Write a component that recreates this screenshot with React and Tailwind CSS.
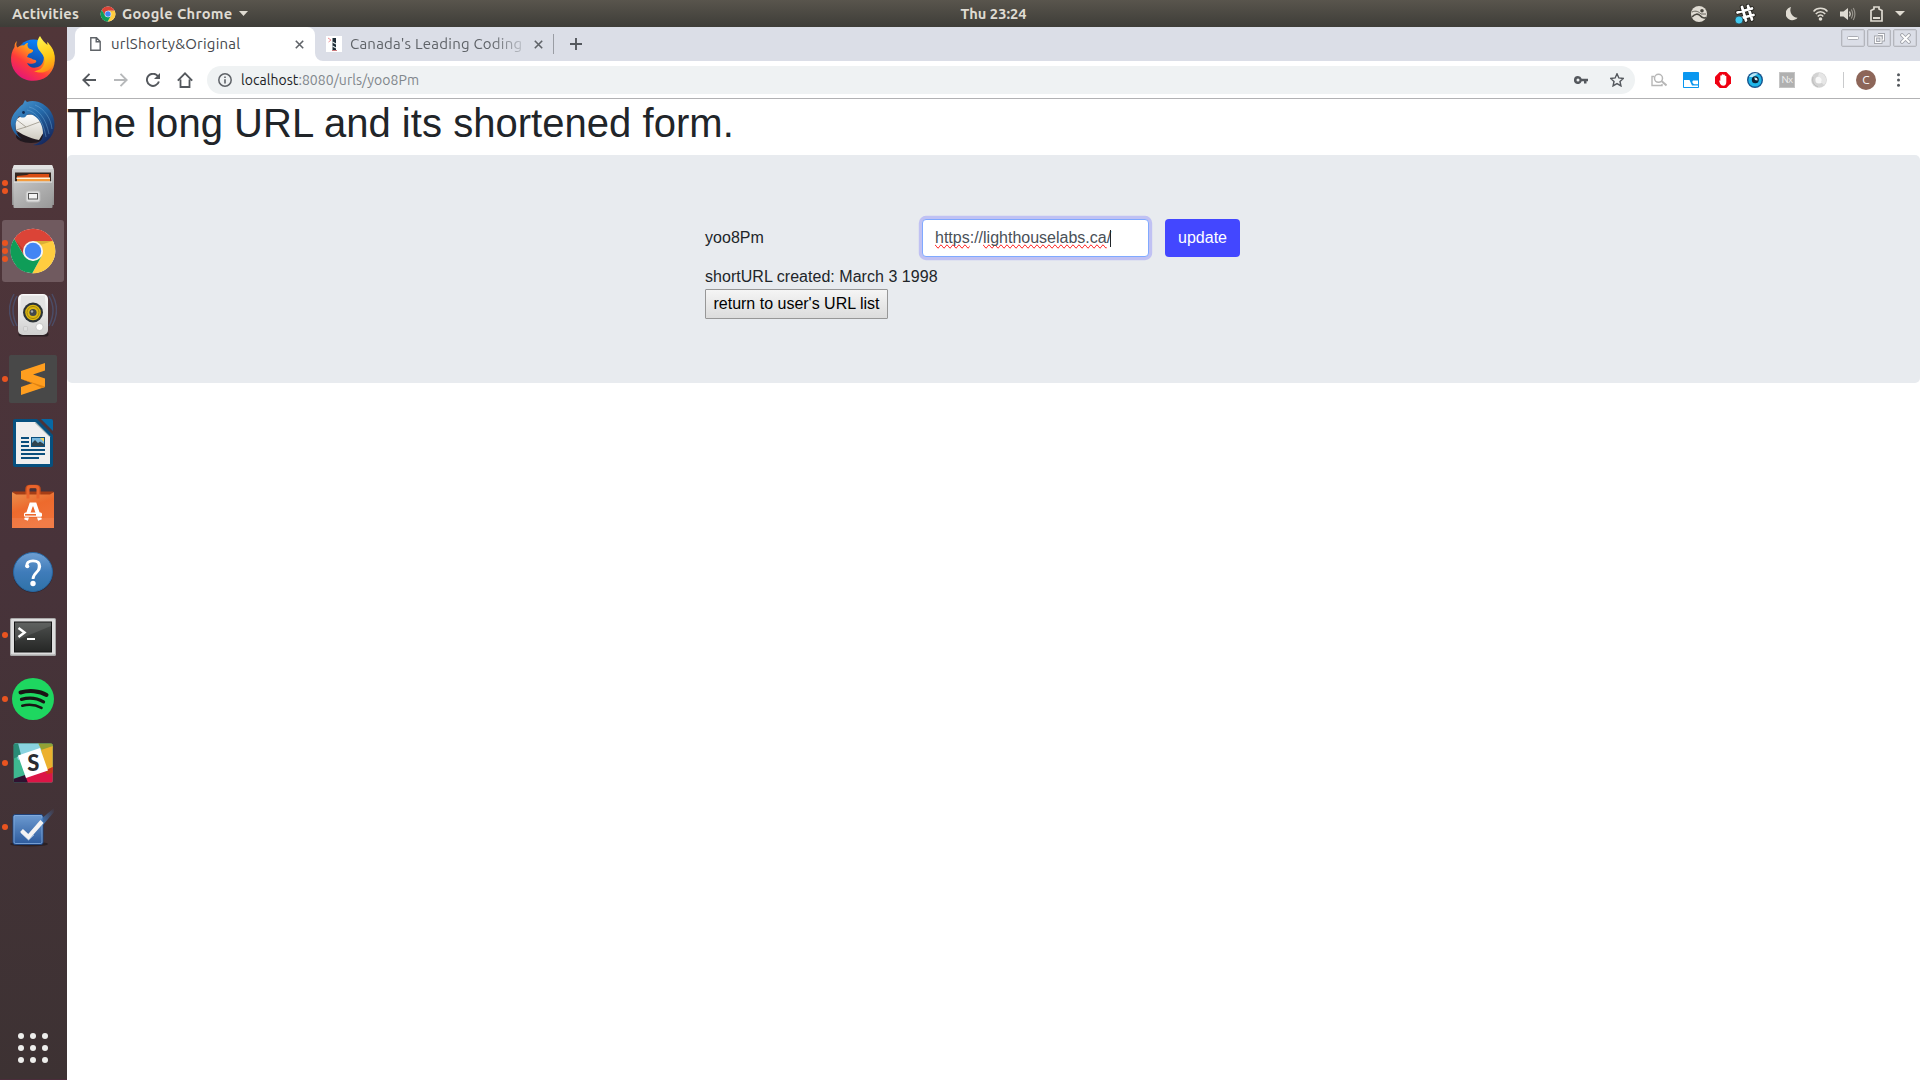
import React from "react";

const ui = "font-['Ubuntu','Noto_Sans',sans-serif]";
const arial = "font-['Liberation_Sans',Arial,sans-serif]";

function ChromeLogo({ className, ring = 10 }) {
  return (
    <svg className={className} viewBox="0 0 48 48">
      <circle cx="24" cy="24" r="22.3" fill="#fff" />
      <path d="M24 14H43.9A22.3 22.3 0 0 0 5.2 12L15.3 29Z" fill="#db4437" />
      <path d="M43.9 14A22.3 22.3 0 0 1 23.3 46.3L32.7 29 24 14Z" fill="#ffcd40" />
      <path d="M5.2 12A22.3 22.3 0 0 0 23.3 46.3L32.7 29 24 34 15.3 29Z" fill="#0f9d58" />
      <path d="M24 14H43.9L28 19ZM15.3 29 5.2 12 16 24Z" fill="#000" opacity=".14" />
      <circle cx="24" cy="24" r={ring} fill="#f5f5f5" />
      <circle cx="24" cy="24" r="8.2" fill="#4285f4" />
    </svg>
  );
}

function Svg({ children }) {
  return (
    <svg className="h-12 w-12" viewBox="0 0 48 48">
      {children}
    </svg>
  );
}

const Firefox = () => (
  <Svg>
    <defs>
      <linearGradient id="ffa" x1="0.8" y1="0" x2="0.15" y2="0.9">
        <stop offset="0" stopColor="#ffde32" />
        <stop offset=".35" stopColor="#ff9a1c" />
        <stop offset=".65" stopColor="#ff3b3b" />
        <stop offset="1" stopColor="#e3157a" />
      </linearGradient>
      <linearGradient id="ffb" x1="0.6" y1="0" x2="0.3" y2="1">
        <stop offset="0" stopColor="#0a84ff" />
        <stop offset="1" stopColor="#15317f" />
      </linearGradient>
      <linearGradient id="ffc" x1="0.4" y1="0" x2="0.6" y2="1">
        <stop offset="0" stopColor="#fff44f" />
        <stop offset=".6" stopColor="#ffc814" />
        <stop offset="1" stopColor="#ff8a16" />
      </linearGradient>
    </defs>
    <circle cx="24.5" cy="22" r="17.5" fill="url(#ffb)" />
    <path d="M8 6C7 9 7 11 8.500 12.500C11 10.500 13 10 15 10.500C16.500 8.500 18 8 19 8C18 10 18.500 12 20 13.500L24 15C24.500 17 22 18 19.500 19L18 22C20 23 22 23 24 24.500C28 25 28 27 26 28C24 29 20 29 18 28C20 33 26 34 31 31C35 28 36 22 33.500 17L43 14C48 24 46 35 38 41.500C29 48 16 47 9 40C1 33 0 20 5.500 12C5.500 9 6 7.500 8 6Z" fill="url(#ffa)" />
    <path d="M31 1C28 5 27 10 30 15C34 20 37 23 35 29C33 34 29 36 25 36C33 40 41 36 44 30C48 21 44 13 40 9C39.500 8 39 7.500 38 7L38.500 10C36 8 33 5 31 1Z" fill="url(#ffc)" />
  </Svg>
);

const Thunderbird = () => (
  <Svg>
    <defs>
      <linearGradient id="tba" x1="0" y1="0" x2="0.7" y2="1">
        <stop offset="0" stopColor="#4f9fd8" />
        <stop offset=".5" stopColor="#2468a8" />
        <stop offset="1" stopColor="#16295f" />
      </linearGradient>
      <linearGradient id="tbb" x1="0" y1="0" x2="0" y2="1">
        <stop offset="0" stopColor="#fff" />
        <stop offset="1" stopColor="#cfcbc0" />
      </linearGradient>
    </defs>
    <ellipse cx="22" cy="37" rx="15" ry="7" fill="#21191f" />
    <path d="M6 21 14 16 31 15 36 31 30 41C20 39 12 35 7 31Z" fill="url(#tbb)" />
    <path d="M8 21 17 28 33 22M7 31 17 28" fill="none" stroke="#989387" strokeWidth=".8" />
    <path d="M7 12C11 7 13 6 14 5L16 1 18 3C27 0 37 5 42 13C48 23 46 35 39 41C34 46 28 47 24 46C31 44 34 40 34 35C34 29 32 23 28 19C24 15 19 14 17 17C16 19 12 19 10 17C6.500 22 5.500 27 7 32C8 35 10 38 13 40C5 36 1 28 2 22C3 17 5 14 7 12Z" fill="url(#tba)" />
    <path d="M20 8C29 10 37 19 40 35M26 6C36 10 42 20 43 30M18 11C27 13 34 21 37 38" stroke="#7db7e2" strokeWidth=".8" fill="none" opacity=".5" />
    <circle cx="14.500" cy="13.500" r="1.400" fill="#122b52" />
  </Svg>
);

const Files = () => (
  <Svg>
    <defs>
      <linearGradient id="fia" x1="0" y1="0" x2="0" y2="1">
        <stop offset="0" stopColor="#d5d5d5" />
        <stop offset="1" stopColor="#8e8e8e" />
      </linearGradient>
      <linearGradient id="fib" x1="0" y1="0" x2="1" y2="1">
        <stop offset="0" stopColor="#c4c4c4" />
        <stop offset="1" stopColor="#989898" />
      </linearGradient>
    </defs>
    <path d="M5 2H43L45 7V42H3V7Z" fill="url(#fia)" />
    <path d="M5 2H43L44.500 6H3.500Z" fill="#e2e2e2" />
    <rect x="6" y="9.500" width="36" height="10" fill="#342620" />
    <path d="M8 13 18 12 20 11H40V19H8Z" fill="#d94d13" />
    <rect x="7.500" y="14.500" width="33.500" height="1.500" fill="#fff3d8" />
    <rect x="8" y="16" width="33" height="3" fill="#f49b3c" />
    <rect x="4.500" y="18.500" width="39" height="26.500" rx="1" fill="url(#fib)" />
    <path d="M5 19H43" stroke="#e9e9e9" />
    <rect x="17" y="28" width="14" height="11" rx="2" fill="#dedede" stroke="#bbb" />
    <rect x="19.500" y="30.500" width="9" height="5.500" fill="#f3f3f3" stroke="#555" strokeWidth="1" />
  </Svg>
);

const Rhythmbox = () => (
  <Svg>
    <defs>
      <linearGradient id="rha" x1="0" y1="0" x2="0" y2="1">
        <stop offset="0" stopColor="#fafafa" />
        <stop offset="1" stopColor="#cfcfcf" />
      </linearGradient>
    </defs>
    <g fill="none" stroke="#4b6b9e" strokeWidth="1.500" opacity=".45">
      <path d="M5 3Q-4 19 5 35M8 5Q0 19 8 35M43 3Q52 19 43 35M40 5Q48 19 40 35" />
    </g>
    <rect x="9.500" y="41" width="30" height="4.500" rx="2" fill="#2b1f23" />
    <rect x="9" y="3" width="30" height="41" rx="5" fill="url(#rha)" />
    <path d="M12 4.500H36L37 27H11Z" fill="#e3e3e3" />
    <circle cx="24" cy="21.500" r="10" fill="#2d3438" />
    <circle cx="24" cy="21.500" r="7.800" fill="#dcb712" />
    <circle cx="24" cy="21.500" r="6" fill="none" stroke="#a58608" />
    <circle cx="24" cy="21.500" r="3.600" fill="#42484c" />
    <circle cx="23" cy="20.500" r="1.200" fill="#a8acae" />
    <circle cx="30.500" cy="36" r="3.600" fill="#fff" stroke="#bbb" strokeWidth=".7" />
    <rect x="14.500" y="35.500" width="4" height="4.500" rx="1" fill="#ddd" stroke="#c2c2c2" strokeWidth=".7" />
  </Svg>
);

const Sublime = () => (
  <Svg>
    <rect width="48" height="48" rx="2" fill="#484848" />
    <path d="M12 16 36 8V15.500L24 19.500 36 23.500V32L12 40V32L23.500 28 12 24Z" fill="#ff9e1f" />
    <path d="M12 24 36 31.500V32L33 33 23 28.300Z" fill="#e28310" />
  </Svg>
);

const Writer = () => (
  <Svg>
    <path d="M6 0H28L44 16V46Q44 48 42 48H6Q4 48 4 46V2Q4 0 6 0Z" fill="#06507f" />
    <path d="M32 0H42Q44 0 44 2V12Z" fill="#0768a3" />
    <path d="M7 3H26.500L41 17.500V45H7Z" fill="#efefef" />
    <path d="M26.500 3 41 17.500H40L26 4Z" fill="#9aa" />
    <g fill="#0b4f7d">
      <rect x="12" y="18" width="8" height="2" />
      <rect x="12" y="22" width="8" height="2" />
      <rect x="12" y="26" width="8" height="2" />
      <rect x="12" y="30" width="24" height="2" />
      <rect x="12" y="34" width="24" height="2" />
      <rect x="12" y="38" width="18" height="2" />
      <rect x="22" y="18" width="14" height="10" />
    </g>
    <rect x="23" y="19" width="12" height="8" fill="#7ab8dd" />
    <path d="M31 19H35V23Z" fill="#f3d35c" />
    <path d="M23 27V24L26 21 29 24 31 22.500 35 25V27Z" fill="#30444f" />
  </Svg>
);

const Software = () => (
  <Svg>
    <defs>
      <linearGradient id="soa" x1="0" y1="0" x2="0.4" y2="1">
        <stop offset="0" stopColor="#e9914e" />
        <stop offset=".5" stopColor="#ed6a2d" />
        <stop offset="1" stopColor="#f07138" />
      </linearGradient>
    </defs>
    <path d="M3.500 8.500H44.500L42 13H6Z" fill="#a63d15" />
    <path d="M18 12V6Q18 3.500 21 3.500H27Q30 3.500 30 6V12" fill="none" stroke="#c04b1b" strokeWidth="3.500" />
    <path d="M3 9 7 11.500H41L45 9V45H3Z" fill="url(#soa)" />
    <path d="M19 15.500V6Q19 3.500 22 3.500H26Q29 3.500 29 6V15.500" fill="none" stroke="#e9642c" strokeWidth="3" />
    <path d="M3 35H45V45H3Z" fill="#fff" opacity=".08" />
    <path d="M17 37 22.200 21.500H25.800L31 37" fill="none" stroke="#fff" strokeWidth="4" />
    <rect x="15" y="29.500" width="18" height="4.500" rx="1.500" fill="#fff" />
    <rect x="16" y="31" width="11" height="1.600" fill="#ed6a2d" />
    <path d="M13 34.200H35" stroke="#ed6a2d" strokeWidth=".8" />
  </Svg>
);

const Help = () => (
  <Svg>
    <defs>
      <linearGradient id="hea" x1="0" y1="0" x2="0" y2="1">
        <stop offset="0" stopColor="#6f9fd2" />
        <stop offset=".5" stopColor="#3f7cba" />
        <stop offset="1" stopColor="#2f72a8" />
      </linearGradient>
    </defs>
    <circle cx="24" cy="25.500" r="20" fill="#2b2530" />
    <circle cx="24" cy="25" r="19.500" fill="url(#hea)" stroke="#2866a1" />
    <path d="M17.500 19.500C17.500 15.500 20 13.800 24 13.800C28.500 13.800 30.800 16.200 30.800 19.500C30.800 25 24 25.500 24 32" fill="none" stroke="#fff" strokeWidth="2.800" />
    <circle cx="18.300" cy="19.300" r="2" fill="#fff" />
    <path d="M28 14.500C32.500 17 31.500 22 28 24.500C29 20 29 17 28 14.500Z" fill="#fff" />
    <circle cx="24" cy="36.500" r="2.700" fill="#fff" />
  </Svg>
);

const Terminal = () => (
  <Svg>
    <defs>
      <linearGradient id="tea" x1="0" y1="0" x2="0" y2="1">
        <stop offset="0" stopColor="#4d504e" />
        <stop offset="1" stopColor="#262726" />
      </linearGradient>
    </defs>
    <rect x="1" y="7" width="46" height="38" rx="1.500" fill="#a8a8a8" />
    <rect x="2" y="8" width="44" height="35.500" rx="1" fill="#dedede" />
    <rect x="5" y="10.500" width="38" height="31" fill="#161616" />
    <rect x="6" y="11.500" width="36" height="29" fill="url(#tea)" />
    <path d="M6 11.500H42V15L6 30Z" fill="#fff" opacity=".1" />
    <path d="M9.500 17 15.500 21.500 9.500 26" fill="none" stroke="#fff" strokeWidth="2.500" />
    <rect x="18" y="27" width="8" height="2" fill="#fff" />
  </Svg>
);

const Spotify = () => (
  <Svg>
    <circle cx="24" cy="24" r="21" fill="#1ed760" />
    <g fill="none" stroke="#191414" strokeLinecap="round">
      <path d="M11.500 17.500C20 15 30.500 15.700 37.500 20" strokeWidth="4" />
      <path d="M12.500 24.300C20 22.200 28 23 34.500 26.800" strokeWidth="3.300" />
      <path d="M13.300 30.700C20 29 26.500 29.600 32.500 32.800" strokeWidth="2.600" />
    </g>
  </Svg>
);

const Slack = () => (
  <Svg>
    <defs>
      <clipPath id="sla">
        <rect x="4.700" y="4.500" width="39" height="39" rx="1.500" />
      </clipPath>
    </defs>
    <g clipPath="url(#sla)">
      <rect x="4" y="4" width="40" height="40" fill="#3eb890" />
      <path d="M4 4H30L34 12 9 21Z" fill="#89d3df" />
      <path d="M4 4H9L12 16 4 20Z" fill="#298b76" />
      <path d="M29 4H44V9L33 12Z" fill="#93a135" />
      <path d="M32 11 44 7V30L37 33Z" fill="#ecb02e" />
      <path d="M44 28V44H17L14 38 37 31Z" fill="#dc1546" />
      <path d="M4 40 16 36 19 44H4Z" fill="#2f1130" />
      <path d="M36 32 44 28V34L38 35Z" fill="#c63a18" />
      <path d="M9 16.500 31 9 39 31.500 17 39Z" fill="#fff" />
    </g>
    <text x="24.200" y="31.500" textAnchor="middle" fontFamily="Lato" fontWeight="900" fontSize="22" fill="#2a2c30">S</text>
  </Svg>
);

const Todo = () => (
  <Svg>
    <defs>
      <linearGradient id="toa" x1="0" y1="0" x2="0" y2="1">
        <stop offset="0" stopColor="#6d9bd1" />
        <stop offset="1" stopColor="#2c5a9c" />
      </linearGradient>
      <linearGradient id="tob" x1="0" y1="1" x2="1" y2="0">
        <stop offset="0" stopColor="#3e78bd" />
        <stop offset="1" stopColor="#3e78bd" stopOpacity="0" />
      </linearGradient>
    </defs>
    <ellipse cx="20" cy="41" rx="19" ry="2.500" fill="#1e1518" opacity=".6" />
    <rect x="4" y="11.500" width="30" height="30" rx="2" fill="url(#toa)" stroke="#1f4279" />
    <rect x="5" y="12.500" width="28" height="28" rx="1.500" fill="none" stroke="#86afdf" strokeWidth=".8" />
    <path d="M32 16 45 5V9L34 22Z" fill="url(#tob)" />
    <path d="M12 30 19.500 37 25 32" fill="none" stroke="#9cbce3" strokeWidth=".9" />
    <path d="M12.500 27.500 19.500 34 33 18.500" fill="none" stroke="#f4f4f4" strokeWidth="4.200" />
  </Svg>
);

const dockItems = [
  { name: "Firefox", icon: <Firefox />, dots: 0 },
  { name: "Thunderbird", icon: <Thunderbird />, dots: 0 },
  { name: "Files", icon: <Files />, dots: 2 },
  { name: "Chrome", icon: <ChromeLogo className="h-12 w-12" />, dots: 3, active: true },
  { name: "Rhythmbox", icon: <Rhythmbox />, dots: 0 },
  { name: "Sublime", icon: <Sublime />, dots: 1 },
  { name: "Writer", icon: <Writer />, dots: 0 },
  { name: "Software", icon: <Software />, dots: 0 },
  { name: "Help", icon: <Help />, dots: 0 },
  { name: "Terminal", icon: <Terminal />, dots: 1 },
  { name: "Spotify", icon: <Spotify />, dots: 1 },
  { name: "Slack", icon: <Slack />, dots: 1 },
  { name: "Todo", icon: <Todo />, dots: 1 },
];

function Dock() {
  return (
    <aside className="flex w-[67px] shrink-0 flex-col justify-between border-b border-[#4b2c3b] bg-linear-to-b from-[#513639] via-[#48333a] to-[#3d3233] pt-px pl-0.5">
      <div className="flex flex-col gap-0.5">
        {dockItems.map((d) => (
          <div
            key={d.name}
            className={`relative flex h-[62px] w-[62px] items-center justify-center rounded-[3px] ${d.active ? "bg-[#705a5f]" : ""}`}
          >
            <div className="absolute inset-y-0 left-0 flex flex-col items-center justify-center gap-[2.400px]">
              {Array.from({ length: d.dots }, (_, i) => (
                <span key={i} className="h-1.5 w-1.5 rounded-full bg-[#e95420]" />
              ))}
            </div>
            {d.icon}
          </div>
        ))}
      </div>
      <div className="mb-4 ml-4 grid w-[30px] grid-cols-3 gap-1.5">
        {Array.from({ length: 9 }, (_, i) => (
          <span key={i} className="h-1.5 w-1.5 rounded-full bg-[#eeeeec]" />
        ))}
      </div>
    </aside>
  );
}

function TopBar() {
  return (
    <header className={`${ui} flex h-[27px] items-center bg-linear-to-b from-[#59554d] to-[#3e3d38] text-[14.670px] font-bold text-[#dfdbd2]`}>
      <div className="flex flex-1 items-center pl-3">
        <span className="w-[88px] whitespace-nowrap tracking-[0.180px]">Activities</span>
        <ChromeLogo className="h-4 w-4" />
        <span className="ml-1.5 w-[111px] whitespace-nowrap tracking-[0.300px]">Google Chrome</span>
        <svg className="ml-1.5 h-[5px] w-[9px]" viewBox="0 0 9 5"><path d="M0 0H9L4.500 5Z" fill="#dfdbd2" /></svg>
      </div>
      <span className="pl-[70px] whitespace-nowrap">Thu 23:24</span>
      <div className="flex flex-1 items-center justify-end pr-[15px]">
        <svg className="mr-[27px] h-4 w-4" viewBox="0 0 16 16">
          <circle cx="8" cy="8" r="8" fill="#dfdbd2" />
          <path d="M1 11C4 7.500 7 7.500 9 9.500C11 12 13 12.500 15 11.500" fill="none" stroke="#494740" strokeWidth="1.600" />
          <path d="M1 6C5 4 8 6 10 8L15 8" fill="none" stroke="#494740" strokeWidth=".8" />
          <circle cx="11" cy="4.700" r="1.800" fill="#494740" />
        </svg>
        <svg className="mr-[30px] h-[22px] w-[22px]" viewBox="0 0 22 22">
          <g fill="none" strokeLinecap="round">
            <path d="M8 4 12 17.500M14 3 18 16.500M3.500 9.500 18 5.500M5.500 15.500 19.500 12" stroke="#26251f" strokeWidth="4.600" />
            <path d="M8 4 12 17.500M14 3 18 16.500M3.500 9.500 18 5.500M5.500 15.500 19.500 12" stroke="#fff" strokeWidth="2.700" />
          </g>
          <circle cx="5" cy="17" r="4" fill="#3fc8ee" stroke="#2c3a3d" strokeWidth=".7" />
        </svg>
        <svg className="mr-[15px] h-[15px] w-3" viewBox="0 0 13 15"><path d="M5.500 .5A8 8 0 0 0 12.500 12A7.200 7.200 0 1 1 5.500 .5Z" fill="#dfdbd2" /></svg>
        <svg className="mr-3 h-[14px] w-[15px]" viewBox="0 0 15 14" fill="none" stroke="#dfdbd2" strokeWidth="1.500">
          <path d="M.5 4.500C4 .3 11 .3 14.500 4.500" />
          <path d="M2.800 7C5.300 4 9.700 4 12.200 7" />
          <path d="M4.800 9.500C6.200 7.500 8.800 7.500 10.200 9.500" />
          <circle cx="7.500" cy="12" r="1.800" fill="#dfdbd2" stroke="none" />
        </svg>
        <svg className="mr-[14px] h-[14px] w-4" viewBox="0 0 16 14">
          <path d="M0 4.500H3.500L8 1V13L3.500 9.500H0Z" fill="#dfdbd2" />
          <path d="M9.500 4.500Q11 7 9.500 9.500" fill="none" stroke="#dfdbd2" strokeWidth="1.300" />
          <path d="M11.300 2.500Q14 7 11.300 11.500M13.300 1Q16.500 7 13.300 13" fill="none" stroke="#96938b" strokeWidth="1.200" />
        </svg>
        <svg className="mr-3 h-4 w-[13px]" viewBox="0 0 13 16">
          <path d="M4 1H9V3L12 4.500V15H1V4.500L4 3Z" fill="none" stroke="#dfdbd2" strokeWidth="1.700" />
          <rect x="3" y="11" width="7" height="2" fill="#dfdbd2" />
        </svg>
        <svg className="h-[5px] w-[10px]" viewBox="0 0 9 5" preserveAspectRatio="none"><path d="M0 0H9L4.500 5Z" fill="#dfdbd2" /></svg>
      </div>
    </header>
  );
}

const Cross = ({ className }) => (
  <svg className={className} viewBox="0 0 9 9"><path d="M.8 .8 8.200 8.200M8.200 .8 .8 8.200" stroke="#5f6368" strokeWidth="1.600" /></svg>
);

function WindowButton({ children }) {
  return (
    <span className="flex h-[18px] w-6 items-center justify-center rounded-[2px] border border-[#b4b6bd] shadow-[inset_0_0_0_1px_#cfd1d9]">
      {children}
    </span>
  );
}

function TabStrip() {
  return (
    <div className={`${ui} flex h-[34px] bg-[#dbdee7] text-[15px] tracking-[0.220px] text-[#5f6368]`}>
      <svg className="h-[34px] w-2 shrink-0" viewBox="0 0 8 34"><path d="M8 26V34H0A8 8 0 0 0 8 26Z" fill="#fff" /></svg>
      <div className="flex w-60 shrink-0 items-center rounded-t-lg bg-white pl-[15px]">
        <svg className="h-[14px] w-[11px]" viewBox="0 0 11 14"><path d="M.8 .8H6.500L10.200 4.500V13.200H.8ZM6.200 .8V4.800H10.200" fill="none" stroke="#5f6368" strokeWidth="1.400" /></svg>
        <span className="ml-[10px] w-[184px] whitespace-nowrap text-[#45484d]">urlShorty&amp;Original</span>
        <Cross className="h-[9px] w-[9px]" />
      </div>
      <svg className="h-[34px] w-2 shrink-0" viewBox="0 0 8 34"><path d="M0 26V34H8A8 8 0 0 1 0 26Z" fill="#fff" /></svg>
      <div className="flex items-center pl-[3px]">
        <svg className="h-4 w-4" viewBox="0 0 16 16">
          <rect width="16" height="16" fill="#fff" />
          <path d="M2 2 5 4 2.500 6" fill="none" stroke="#f08d92" />
          <rect x="6.500" y="2" width="3.500" height="12" fill="#1d2c36" />
          <path d="M6.500 6 10 8M6.500 10 10 12" stroke="#dfe8ea" strokeWidth="1.300" />
          <rect x="6" y="14" width="5" height="1" fill="#c9797d" />
        </svg>
        <span className="ml-2 w-[172px] whitespace-nowrap mask-r-from-82% mask-r-to-106%">Canada's Leading Coding</span>
        <Cross className="ml-3 h-[9px] w-[9px]" />
        <span className="ml-2.5 h-5 w-px bg-[#9a9da4]" />
        <svg className="ml-4 h-3 w-3" viewBox="0 0 12 12"><path d="M6 0V12M0 6H12" stroke="#54585e" strokeWidth="1.900" /></svg>
      </div>
      <div className="ml-auto flex gap-0.5 pt-0.5 pr-[3px]">
        <WindowButton><svg className="h-1 w-3" viewBox="0 0 12 4"><rect x=".5" y=".5" width="11" height="3" rx="1" fill="#fff" stroke="#aaacb3" /></svg></WindowButton>
        <WindowButton>
          <svg className="h-[11px] w-[11px]" viewBox="0 0 11 11" fill="none">
            <path d="M4 1.500H9.500V7H8M1.500 4H7V9.500H1.500Z" stroke="#a3a5ac" strokeWidth="3" />
            <path d="M4 1.500H9.500V7H8M1.500 4H7V9.500H1.500Z" stroke="#fff" strokeWidth="1.200" />
          </svg>
        </WindowButton>
        <WindowButton>
          <svg className="h-[11px] w-[11px]" viewBox="0 0 11 11" strokeLinecap="round">
            <path d="M2 2 9 9M9 2 2 9" stroke="#a3a5ac" strokeWidth="3.800" />
            <path d="M2 2 9 9M9 2 2 9" stroke="#fff" strokeWidth="1.800" />
          </svg>
        </WindowButton>
      </div>
    </div>
  );
}

function Toolbar() {
  return (
    <div className={`${ui} flex h-[38px] items-center border-b border-[#b2b2b4] bg-white pl-[15px] text-[14px]`}>
      <svg className="h-[14px] w-[14px]" viewBox="0 0 14 14" fill="none" stroke="#54585d" strokeWidth="1.900"><path d="M7.500 .8 1.300 7 7.500 13.200M1.300 7H14" /></svg>
      <svg className="ml-[18px] h-[14px] w-[14px]" viewBox="0 0 14 14" fill="none" stroke="#b6b8ba" strokeWidth="1.900"><path d="M6.500 .8 12.700 7 6.500 13.200M12.700 7H0" /></svg>
      <svg className="ml-[18px] h-[14px] w-[14px]" viewBox="0 0 14 14"><path d="M11.800 3A6.100 6.100 0 1 0 12.900 8.500" fill="none" stroke="#54585d" strokeWidth="1.900" /><path d="M14 0V6H8Z" fill="#54585d" /></svg>
      <svg className="ml-[17px] h-4 w-4" viewBox="0 0 16 16" fill="none" stroke="#54585d" strokeWidth="1.800"><path d="M.8 8.700 8 1.300 15.200 8.700M3.500 7.500V15H12.500V7.500" /></svg>
      <div className="ml-[14px] flex h-7 w-[1428px] items-center rounded-full bg-[#eff2f3] pr-[11px] pl-[11px]">
        <svg className="h-[14px] w-[14px]" viewBox="0 0 14 14"><circle cx="7" cy="7" r="6.200" fill="none" stroke="#5f6368" strokeWidth="1.500" /><path d="M7 6.200V10.500M7 3.400V5" stroke="#5f6368" strokeWidth="1.600" /></svg>
        <span className="ml-[9px] pt-0.5 whitespace-nowrap tracking-[0.050px] text-[#80868b]"><span className="text-[#202124]">localhost</span>:8080/urls/yoo8Pm</span>
        <svg className="ml-auto h-2 w-[14px]" viewBox="0 0 14 8"><path d="M4 0A4 4 0 1 0 7.700 5.300H10V7.500H12.500V5.300H14V2.700H7.700A4 4 0 0 0 4 0Z" fill="#54585d" /><circle cx="4" cy="4" r="1.500" fill="#eff2f3" /></svg>
        <svg className="ml-[22px] h-[14px] w-[14px]" viewBox=".7 .7 13.600 13.600"><path d="M7.500 1.500 9.300 5.500 13.700 6 10.400 8.900 11.300 13.200 7.500 11 3.700 13.200 4.600 8.900 1.300 6 5.700 5.500Z" fill="none" stroke="#54585d" strokeWidth="1.400" /></svg>
      </div>
      <svg className="ml-4 h-[14px] w-4" viewBox="0 0 16 14" fill="none" stroke="#b7b7b7"><path d="M3 3.500H1V12.500H11V11" strokeWidth="1.400" /><circle cx="7.500" cy="5.300" r="4" strokeWidth="1.500" /><path d="M10.500 8 15.500 12.500" strokeWidth="2" /></svg>
      <svg className="ml-4 h-4 w-4" viewBox="0 0 16 16"><rect width="16" height="16" rx=".8" fill="#0a97f0" /><path d="M1 8H6.500L9 13.500H15V15H1Z" fill="#fff" /><path d="M10 8.500H15V12.300H11.500Q10.300 12.300 9.200 10Z" fill="#fff" /></svg>
      <svg className="ml-4 h-4 w-4" viewBox="0 0 16 16"><path d="M4.700 0H11.300L16 4.700V11.300L11.300 16H4.700L0 11.300V4.700Z" fill="#ef0012" /><path d="M4 8.500 5.300 8.800V4.200Q5.300 3.300 6 3.300T6.700 4.200V3Q6.700 2.200 7.500 2.200T8.300 3V3.200Q8.300 2.500 9.100 2.500T9.900 3.500V4.200Q9.900 3.700 10.600 3.700T11.300 4.500V10Q11.300 13.700 8.300 13.700Q6 13.700 5.100 11.800Z" fill="#fff" /></svg>
      <svg className="ml-4 h-4 w-4" viewBox="0 0 16 16"><circle cx="8" cy="8" r="8" fill="#15548e" /><circle cx="8" cy="8" r="6.600" fill="#20b6e8" /><path d="M2 5A7 7 0 0 1 11 1.500L6 5Z" fill="#dff5fb" opacity=".8" /><circle cx="8.300" cy="7.800" r="3.500" fill="#0b2135" /><path d="M7.300 5.500A2.600 2.600 0 0 1 10.500 8.500L8 8Z" fill="#dceff5" /></svg>
      <span className="ml-4 flex h-4 w-4 items-center justify-center border border-[#c4c4c4] bg-[#b0b0b0] text-[10px] leading-none tracking-[-0.500px] text-[#f2f2f2]">Nx</span>
      <svg className="ml-4 h-4 w-4" viewBox="0 0 16 16"><circle cx="8" cy="8" r="7.800" fill="#d3d3d3" /><circle cx="8" cy="8" r="3.600" fill="#f8f8f8" /><path d="M8 1A7 7 0 0 1 13 13L10 10Q12 6 7 4.500Z" fill="#e6e6e6" /><path d="M2 5Q0 12 7 15" fill="none" stroke="#bdbdbd" strokeWidth="1" /></svg>
      <span className="ml-4 h-4 w-px bg-[#c9cacc]" />
      <span className="ml-3 flex h-5 w-5 items-center justify-center rounded-full bg-[#8d6659] text-[12px] leading-none text-white">C</span>
      <svg className="ml-[21px] h-[14px] w-[3px]" viewBox="0 0 3 14" fill="#54585d"><circle cx="1.500" cy="1.800" r="1.500" /><circle cx="1.500" cy="7" r="1.500" /><circle cx="1.500" cy="12.200" r="1.500" /></svg>
    </div>
  );
}

function Squiggle({ children }) {
  return <span className="[text-decoration-line:spelling-error]">{children}</span>;
}

function Page() {
  return (
    <main className={`${arial} flex-1 bg-white text-[16px] leading-6 text-[#212529]`}>
      <h1 className="mb-2 text-[40px] leading-[48px] tracking-[0.035px]">The long URL and its shortened form.</h1>
      <section className="rounded-[5px] bg-[#e8ebef] py-16 pl-[638px]">
        <div className="mb-2 flex h-[38px] items-center">
          <span className="w-[217px] tracking-[0.035px]">yoo8Pm</span>
          <div className="flex h-[38px] w-[227px] items-center rounded-[4px] border border-[#80a9ff] bg-white px-3 text-[#495057] shadow-[0_0_0_3.200px_#c0c1f3]">
            <Squiggle>https</Squiggle>://<Squiggle>lighthouselabs.ca</Squiggle>/
            <span className="-ml-px h-[17px] w-px bg-[#212529]" />
          </div>
          <button className="ml-4 h-[38px] w-[75px] rounded-[4px] bg-[#4347ff] text-white">update</button>
        </div>
        <p className="tracking-[0.035px]">shortURL created: March 3 1998</p>
        <button className="block h-[30px] w-[183px] rounded-[1px] border border-[#979797] bg-linear-to-b from-[#f5f5f5] to-[#dcdcdc] pb-px leading-[18px] whitespace-nowrap text-black">
          return to user's URL list
        </button>
      </section>
    </main>
  );
}

export default function App() {
  return (
    <div className="flex h-[1080px] w-[1920px] flex-col overflow-hidden">
      <TopBar />
      <div className="flex flex-1">
        <Dock />
        <div className="flex min-w-0 flex-1 flex-col">
          <TabStrip />
          <Toolbar />
          <Page />
        </div>
      </div>
    </div>
  );
}
